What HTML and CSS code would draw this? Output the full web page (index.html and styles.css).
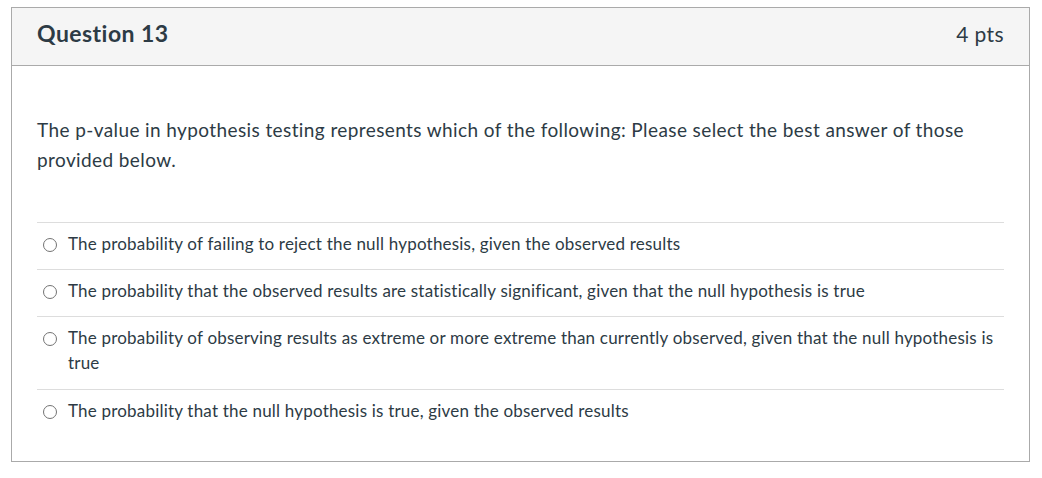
FILE: index.html
```html
<!DOCTYPE html>
<html lang="en">
<head>
<meta charset="utf-8">
<title>Question 13</title>
<link rel="stylesheet" href="styles.css">
</head>
<body>
<div class="question">
  <div class="q-header">
    <span class="q-title">Question 13</span>
    <span class="q-points">4 pts</span>
  </div>
  <div class="q-body">
    <p class="q-text">The p-value in hypothesis testing represents which of the following: Please select the best answer of those provided below.</p>
    <div class="answers">
      <label class="answer"><span class="radio"></span><span class="answer-text">The probability of failing to reject the null hypothesis, given the observed results</span></label>
      <label class="answer"><span class="radio"></span><span class="answer-text">The probability that the observed results are statistically significant, given that the null hypothesis is true</span></label>
      <label class="answer"><span class="radio"></span><span class="answer-text">The probability of observing results as extreme or more extreme than currently observed, given that the null hypothesis is true</span></label>
      <label class="answer"><span class="radio"></span><span class="answer-text">The probability that the null hypothesis is true, given the observed results</span></label>
    </div>
  </div>
</div>
</body>
</html>
```
FILE: styles.css
```css
* { box-sizing: border-box; }
body {
  margin: 0;
  padding: 7px 13px 0 11px;
  background: #fff;
  font-family: Lato, "Noto Sans", sans-serif;
  color: #2d3b45;
}
.question {
  border: 1px solid #aaaaaa;
  width: 1019px;
}
.q-header {
  display: flex;
  justify-content: space-between;
  align-items: baseline;
  height: 58px;
  padding: 10px 25px 0 25px;
  background: #f5f5f5;
  border-bottom: 1px solid #aaaaaa;
  line-height: 30px;
}
.q-title {
  font-size: 23px;
  font-weight: 700;
  letter-spacing: 0.45px;
}
.q-points {
  font-size: 21px;
  font-weight: 400;
  letter-spacing: 0.4px;
}
.q-body {
  padding: 49px 25px 25px 25px;
}
.q-text {
  margin: 0 0 47px 0;
  font-size: 19px;
  line-height: 30px;
  letter-spacing: 0.4px;
}
.answers {
  display: flex;
  flex-direction: column;
}
.answer {
  display: flex;
  align-items: flex-start;
  gap: 11px;
  border-top: 1px solid #dddddd;
  padding: 8px 0 13.2px 6px;
  font-size: 17px;
  line-height: 25px;
  letter-spacing: 0.2px;
}
.radio {
  flex: none;
  width: 14px;
  height: 14px;
  margin-top: 7px;
  border: 1.5px solid #737373;
  border-radius: 50%;
  background: #fff;
}
```
